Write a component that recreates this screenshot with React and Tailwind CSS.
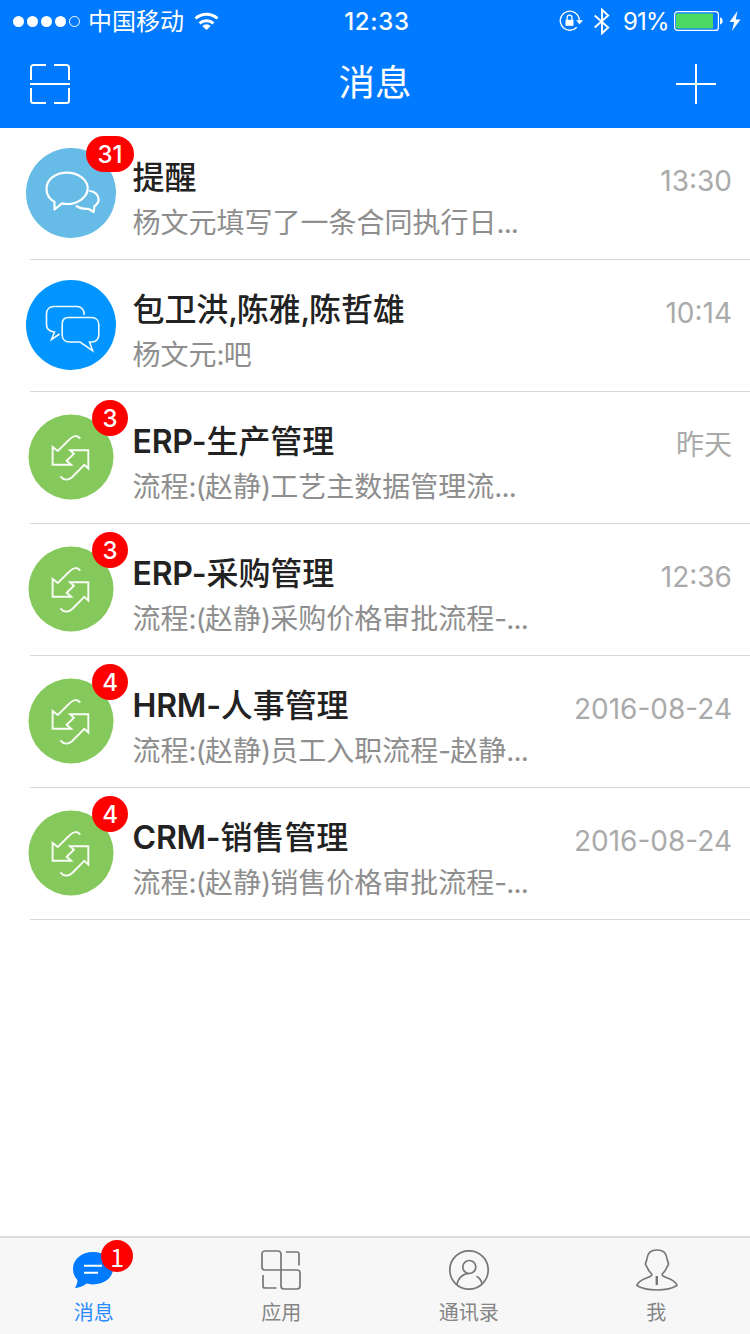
import React from 'react';

function BubblesIcon() {
  return (
    <svg className="block size-[90px]" viewBox="0 0 90 90" fill="none">
      <circle cx="45" cy="45" r="45" fill="#66bce6" />
      <g stroke="#fff" strokeWidth="2.2" strokeLinejoin="round" strokeLinecap="round">
        <path d="M28.500 61.500v-7.600C23.500 51 20.500 46.500 20.500 41 20.500 31.500 29.500 24.600 41 24.600S61.700 32 61.700 40.300 52.500 56 41 56c-2 0-3.600-.2-5-.6z" />
        <path d="M64 43c5 .5 8.600 4 8.600 8.600 0 2.600-1.400 4.800-4.300 6.900l-.6 5.500-5.300-3.200c-5 .4-9-.5-11.800-2.600" />
      </g>
    </svg>
  );
}

function ChatIcon() {
  return (
    <svg className="block size-[90px]" viewBox="0 0 90 90" fill="none">
      <circle cx="45" cy="45" r="45" fill="#0095ff" />
      <g stroke="#fff" strokeOpacity="0.95" strokeWidth="1.6" strokeLinejoin="miter">
        <path d="M58 35v-1.500c0-4-3-7-7-7H28c-4.500 0-7.500 3-7.500 7.500v10.500c0 4.500 3 7 8 7.500l-3 7.500 8-5.500" />
        <path d="M42.500 37.500h23c4.500 0 7.300 3 7.300 7v10.500c0 4-2.800 7-7 7h-2.300l3.100 8.600-12.500-8.600H43.500c-4.500 0-7.300-3-7.300-7v-11c0-4 2.500-6.500 6.300-6.500z" />
      </g>
    </svg>
  );
}

function FlowIcon() {
  return (
    <svg className="block size-[90px]" viewBox="0 0 90 90" fill="none">
      <circle cx="45" cy="45" r="42.500" fill="#85c85c" />
      <path
        d="M54.300 26.500c-3.300-3.600-7-3-10.300.4L31.800 39l-5.200-4V52.700h18.600l-4.500-4 7.200-6.900-3.900-3.600H62.300V56.500l-4-3.700-12 12.200c-4 3.600-8.300 3.600-12-.7"
        stroke="#fff"
        strokeOpacity="0.95"
        strokeWidth="1.900"
      />
    </svg>
  );
}

const avatars = { bubbles: BubblesIcon, chat: ChatIcon, flow: FlowIcon };

const messages = [
  { icon: 'bubbles', badge: '31', title: '提醒', text: '杨文元填写了一条合同执行日...', time: '13:30' },
  { icon: 'chat', badge: '', title: '包卫洪,陈雅,陈哲雄', text: '杨文元:吧', time: '10:14' },
  { icon: 'flow', badge: '3', title: 'ERP-生产管理', text: '流程:(赵静)工艺主数据管理流...', time: '昨天' },
  { icon: 'flow', badge: '3', title: 'ERP-采购管理', text: '流程:(赵静)采购价格审批流程-...', time: '12:36' },
  { icon: 'flow', badge: '4', title: 'HRM-人事管理', text: '流程:(赵静)员工入职流程-赵静...', time: '2016-08-24' },
  { icon: 'flow', badge: '4', title: 'CRM-销售管理', text: '流程:(赵静)销售价格审批流程-...', time: '2016-08-24' },
];

// Latin letters and punctuation are set a little tighter than the Chinese around them.
function MixedText({ children, latinClass }) {
  return children.split(/([ -~]+)/).map((run, i) => {
    if (i % 2 === 0) return run;
    return (
      <span key={i} className={run === ',' ? 'tracking-[-1.2px]' : latinClass}>
        {run}
      </span>
    );
  });
}

function MessageRow({ icon, badge, title, text, time }) {
  const Avatar = avatars[icon];
  return (
    <li className="flex h-[132px] pl-[26px]">
      <div className="relative mt-5 size-[90px] shrink-0">
        <Avatar />
        {badge && (
          <span
            className={
              badge.length > 1
                ? 'absolute -top-3 left-[60px] flex h-9 w-12 items-center justify-center rounded-full bg-[#ff0000] pt-[2px] text-[24px] font-medium text-white'
                : 'absolute -top-3 left-[66px] flex size-9 items-center justify-center rounded-full bg-[#ff0000] pt-[2px] text-[24px] font-medium text-white'
            }
          >
            {badge}
          </span>
        )}
      </div>
      <div className="-ml-[86px] flex grow border-b border-[#d9d9dc] pl-[102.5px] pr-[18px]">
        <div className="grow pt-7">
          <h2 className="whitespace-nowrap text-[32px] leading-[44px] font-medium tracking-[-0.1px] text-[#222]">
            <MixedText latinClass="font-semibold tracking-[-0.2px]">{title}</MixedText>
          </h2>
          <p className="mt-[3px] whitespace-nowrap text-[28px] leading-10 text-[#8e8e8e]">
            <MixedText latinClass="tracking-[-0.9px]">{text}</MixedText>
          </p>
        </div>
        <time className="mt-[33px] whitespace-nowrap text-[28px] leading-10 text-[#aaa]">{time}</time>
      </div>
    </li>
  );
}

function StatusBar() {
  return (
    <div className="grid h-10 grid-cols-3 items-center text-[24px] leading-10">
      <div className="flex items-center pl-3">
        <svg className="h-3 w-[70px]" viewBox="0 0 70 12" fill="#fff">
          <circle cx="6.500" cy="6.500" r="5.500" />
          <circle cx="20.500" cy="6.500" r="5.500" />
          <circle cx="34.500" cy="6.500" r="5.500" />
          <circle cx="48.500" cy="6.500" r="5.500" />
          <circle cx="62.500" cy="6.500" r="5" fill="none" stroke="#fff" />
        </svg>
        <span className="mt-[2px] ml-[6px] whitespace-nowrap">中国移动</span>
        <svg className="ml-[10px] h-5 w-[26px]" viewBox="0 0 26 20" fill="none" stroke="#fff" strokeWidth="3">
          <path d="M1.500 7.500a16.500 16.500 0 0 1 22 0" />
          <path d="M5.500 12.300a10.500 10.500 0 0 1 14 0" />
          <path d="M12.500 19 8.300 14.900a6 6 0 0 1 8.400 0z" fill="#fff" stroke="none" />
        </svg>
      </div>
      <div className="mt-[1px] pl-1 text-center font-medium tracking-[0.7px]">12:33</div>
      <div className="flex items-center justify-end pr-[9px]">
        <svg className="h-6 w-6" viewBox="0 0 24 24" fill="none">
          <path d="M17.800 18.100a9.500 9.500 0 1 1 2.500-6.500" stroke="#fff" strokeWidth="1.400" />
          <path d="M17 11.300h7l-3.500 4z" fill="#fff" />
          <rect x="6.500" y="10.800" width="8" height="6" fill="#fff" />
          <path d="M8.100 11V8.600a2.400 2.400 0 0 1 4.800 0V11" stroke="#fff" strokeWidth="1.300" />
        </svg>
        <svg className="ml-[11px] h-[27px] w-4" viewBox="0 0 16 27" fill="none" stroke="#fff" strokeWidth="1.900">
          <path d="m.7 7.500 13.500 12L8 25.300V1.700l6.200 5.800L.7 19.500" />
        </svg>
        <span className="mt-[2px] ml-[13px] w-[46px] whitespace-nowrap tracking-[-0.8px]">91%</span>
        <svg className="ml-[5px] h-5 w-[49px]" viewBox="0 0 49 20">
          <rect x=".6" y=".6" width="43.800" height="18.800" rx="3" fill="none" stroke="#fff" strokeWidth="1.200" />
          <rect x="2" y="2.500" width="37" height="15" rx="1" fill="#4cd964" />
          <path d="M46 6.500c3.600.3 3.600 6.700 0 7z" fill="#fff" />
        </svg>
        <svg className="ml-[6px] h-5 w-3" viewBox="0 0 12 20" fill="#fff">
          <path d="M8.500 0 .5 11h4.700L3 20 11.500 8.500H6.700z" />
        </svg>
      </div>
    </div>
  );
}

function Header() {
  return (
    <header className="h-32 bg-[#007aff] text-white">
      <StatusBar />
      <div className="flex h-[88px] items-center justify-between pl-[30px] pr-[34px]">
        <svg className="size-10" viewBox="0 0 40 40" fill="none" stroke="#fff" strokeWidth="2">
          <path d="M1 16V3.500A2.500 2.500 0 0 1 3.500 1H16M24 1h12.500A2.500 2.500 0 0 1 39 3.500V16M39 24v12.500a2.500 2.500 0 0 1-2.500 2.500H24M16 39H3.500A2.500 2.500 0 0 1 1 36.500V24M0 20h40" />
        </svg>
        <h1 className="mb-[2px] ml-1 text-[36.500px] leading-[50px]">消息</h1>
        <svg className="size-10" viewBox="0 0 40 40" fill="none" stroke="#fff" strokeWidth="2">
          <path d="M0 20h40M20 0v40" />
        </svg>
      </div>
    </header>
  );
}

function TabItem({ label, active, children }) {
  return (
    <div className={active ? 'flex flex-col items-center pt-3 text-[#007aff]' : 'flex flex-col items-center pt-3 text-[#777]'}>
      <div className="relative size-10">{children}</div>
      <span className={active ? 'mt-[9px] text-[20px] leading-7 text-[#2b8cff]' : 'mt-[9px] text-[20px] leading-7 text-[#858585]'}>
        {label}
      </span>
    </div>
  );
}

function TabBar() {
  return (
    <nav className="grid h-[98px] grid-cols-4 border-t-2 border-[#dcdcdc] bg-[#f7f7f7]">
      <TabItem label="消息" active>
        <svg className="-ml-px size-10" viewBox="0 0 40 40">
          <path d="M20 2C8.500 2 0 9.500 0 18.500c0 5 1.600 8.500 4.500 11.500 0 2.500-.8 5-2.500 8 5-.5 8.500-1.700 11.500-4.400 2 .5 4 .8 6.500.8 11.500 0 20-7 20-16S31.500 2 20 2z" fill="#007aff" />
          <path d="M11 15.800h18M11 22.800h14" stroke="#fff" strokeWidth="2" />
        </svg>
        <span className="absolute -top-[10px] left-[27.500px] flex size-8 items-center justify-center rounded-full bg-[#ff0000] font-['Noto_Sans_CJK_SC'] text-[25px] leading-8 text-white">
          1
        </span>
      </TabItem>
      <TabItem label="应用">
        <svg className="size-10" viewBox="0 0 40 40" fill="none" stroke="#777" strokeWidth="1.700">
          <path d="M20 20V4a3 3 0 0 0-3-3H4a3 3 0 0 0-3 3v13a3 3 0 0 0 3 3h32a3 3 0 0 1 3 3v13a3 3 0 0 1-3 3H23a3 3 0 0 1-3-3zM25 2h11a2 2 0 0 1 2 2v11.500M2 25v11a2 2 0 0 0 2 2h11.500" />
        </svg>
      </TabItem>
      <TabItem label="通讯录">
        <svg className="size-10" viewBox="0 0 40 40" fill="none" stroke="#777" strokeWidth="1.700">
          <circle cx="20" cy="20" r="19.200" />
          <circle cx="20.300" cy="17" r="6.500" />
          <path d="M8 34.500C9 28 14 23.500 20 23.500M27.500 26.200c3 1.500 5 4.500 5.500 8" />
        </svg>
      </TabItem>
      <TabItem label="我">
        <svg className="-mt-px h-[42px] w-[42px]" viewBox="0 0 42 42" fill="none" stroke="#777" strokeWidth="1.700" strokeLinejoin="round">
          <path d="M21 1C15 1 11.500 4.500 11 9.500c0 1.800-1.500 3.500-1.500 5.500 0 1.700 1.300 2.300 2 4 1 2.500 2.400 4.200 3.800 5.500 1 1 .5 2-.8 2.800C11 29.500 2.500 30.500.9 36.500 6.500 40 13 41 21 41s14.500-1 20-4.500c-1.500-6-10-7-13.500-9.200-1.300-.8-1.800-1.800-.8-2.800 1.400-1.300 2.800-3 3.800-5.500.7-1.700 2-2.300 2-4 0-2-1.500-3.700-1.500-5.500C30.500 4.500 27 1 21 1z" />
          <path d="M20.800 27v9" strokeWidth="2.400" />
        </svg>
      </TabItem>
    </nav>
  );
}

export default function App() {
  return (
    <div className="flex h-[1334px] w-[750px] flex-col overflow-hidden bg-white font-[Inter,'Noto_Sans_CJK_SC',sans-serif]">
      <Header />
      <ul className="grow">
        {messages.map((message) => (
          <MessageRow key={message.title} {...message} />
        ))}
      </ul>
      <TabBar />
    </div>
  );
}
